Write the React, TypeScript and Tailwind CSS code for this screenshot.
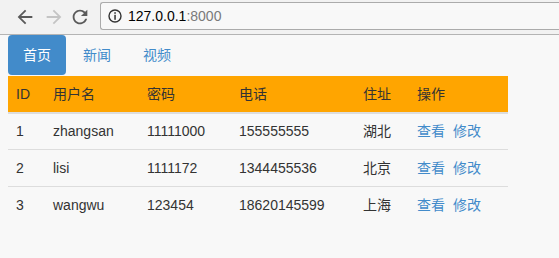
import React from "react";

const rows = [
  { id: "1", name: "zhangsan", pwd: "11111000", tel: "155555555", addr: "湖北" },
  { id: "2", name: "lisi", pwd: "1111172", tel: "1344455536", addr: "北京" },
  { id: "3", name: "wangwu", pwd: "123454", tel: "18620145599", addr: "上海" },
];

const font = { fontFamily: '"Liberation Sans", Arial, "Noto Sans CJK SC", sans-serif' };

export default function App() {
  return (
    <div className="w-[559px] h-[258px] overflow-hidden bg-[#f8f8f8] text-[14px] text-[#333]" style={font}>
      {/* browser toolbar */}
      <div className="h-[35px] bg-[#f2f2f2] border-b border-[#b4b4b4] flex items-start">
        <svg className="ml-[14px] mt-[6px]" width="22" height="22" viewBox="0 0 24 24">
          <path d="M20 11H7.83l5.59-5.59L12 4l-8 8 8 8 1.41-1.41L7.83 13H20v-2z" fill="#5a5a5a" />
        </svg>
        <svg className="ml-[7px] mt-[6px]" width="22" height="22" viewBox="0 0 24 24">
          <path d="M4 11h12.17l-5.59-5.59L12 4l8 8-8 8-1.41-1.41L16.17 13H4v-2z" fill="#c4c4c4" />
        </svg>
        <svg className="ml-[4px] mt-[6px]" width="22" height="22" viewBox="0 0 24 24">
          <path
            d="M17.65 6.35C16.2 4.9 14.21 4 12 4c-4.42 0-7.99 3.58-7.99 8s3.57 8 7.99 8c3.73 0 6.84-2.55 7.73-6h-2.08c-.82 2.33-3.04 4-5.65 4-3.31 0-6-2.69-6-6s2.69-6 6-6c1.66 0 3.14.69 4.22 1.78L13 11h7V4l-2.35 2.35z"
            fill="#5a5a5a"
          />
        </svg>
        <div className="ml-[9px] mt-[2px] h-[28px] flex-1 bg-[#f8f8f8] border border-r-0 border-[#ababab] rounded-l-[3px] flex items-center">
          <svg className="ml-[7px]" width="14" height="14" viewBox="0 0 14 14">
            <circle cx="7" cy="7" r="6" fill="none" stroke="#333" strokeWidth="1.4" />
            <rect x="6.3" y="3.2" width="1.5" height="1.6" fill="#333" />
            <rect x="6.3" y="5.8" width="1.5" height="5" fill="#333" />
          </svg>
          <span className="ml-[6px] text-[14px] leading-none text-black">
            127.0.0.1<span className="text-[#7a7a7a]">:8000</span>
          </span>
        </div>
      </div>

      {/* page */}
      <div className="pl-[8px]">
        <div className="flex gap-[2px] h-[40px]">
          <div className="w-[58px] h-[40px] rounded-[4px] bg-[#428bca] text-white flex items-center justify-center">首页</div>
          <div className="w-[58px] h-[40px] text-[#428bca] flex items-center justify-center">新闻</div>
          <div className="w-[58px] h-[40px] text-[#428bca] flex items-center justify-center">视频</div>
        </div>

        <div className="mt-[1px] w-[500px]">
          <div className="grid grid-cols-[37px_94px_92px_124px_54px_99px] h-[36px] bg-[#ffa500] items-center border-b-2 border-[#ddd] box-content">
            <div className="pl-[8px]">ID</div>
            <div className="pl-[8px]">用户名</div>
            <div className="pl-[8px]">密码</div>
            <div className="pl-[8px]">电话</div>
            <div className="pl-[8px]">住址</div>
            <div className="pl-[8px]">操作</div>
          </div>
          {rows.map((r, i) => (
            <div
              key={r.id}
              className={
                i === 0
                  ? "grid grid-cols-[37px_94px_92px_124px_54px_99px] h-[35px] items-center"
                  : "grid grid-cols-[37px_94px_92px_124px_54px_99px] h-[37px] items-center border-t border-[#ddd]"
              }
            >
              <div className="pl-[8px]">{r.id}</div>
              <div className="pl-[8px]">{r.name}</div>
              <div className="pl-[8px]">{r.pwd}</div>
              <div className="pl-[8px]">{r.tel}</div>
              <div className="pl-[8px]">{r.addr}</div>
              <div className="pl-[8px] text-[#428bca]">
                <span>查看</span>
                <span className="ml-[8px]">修改</span>
              </div>
            </div>
          ))}
        </div>
      </div>
    </div>
  );
}
